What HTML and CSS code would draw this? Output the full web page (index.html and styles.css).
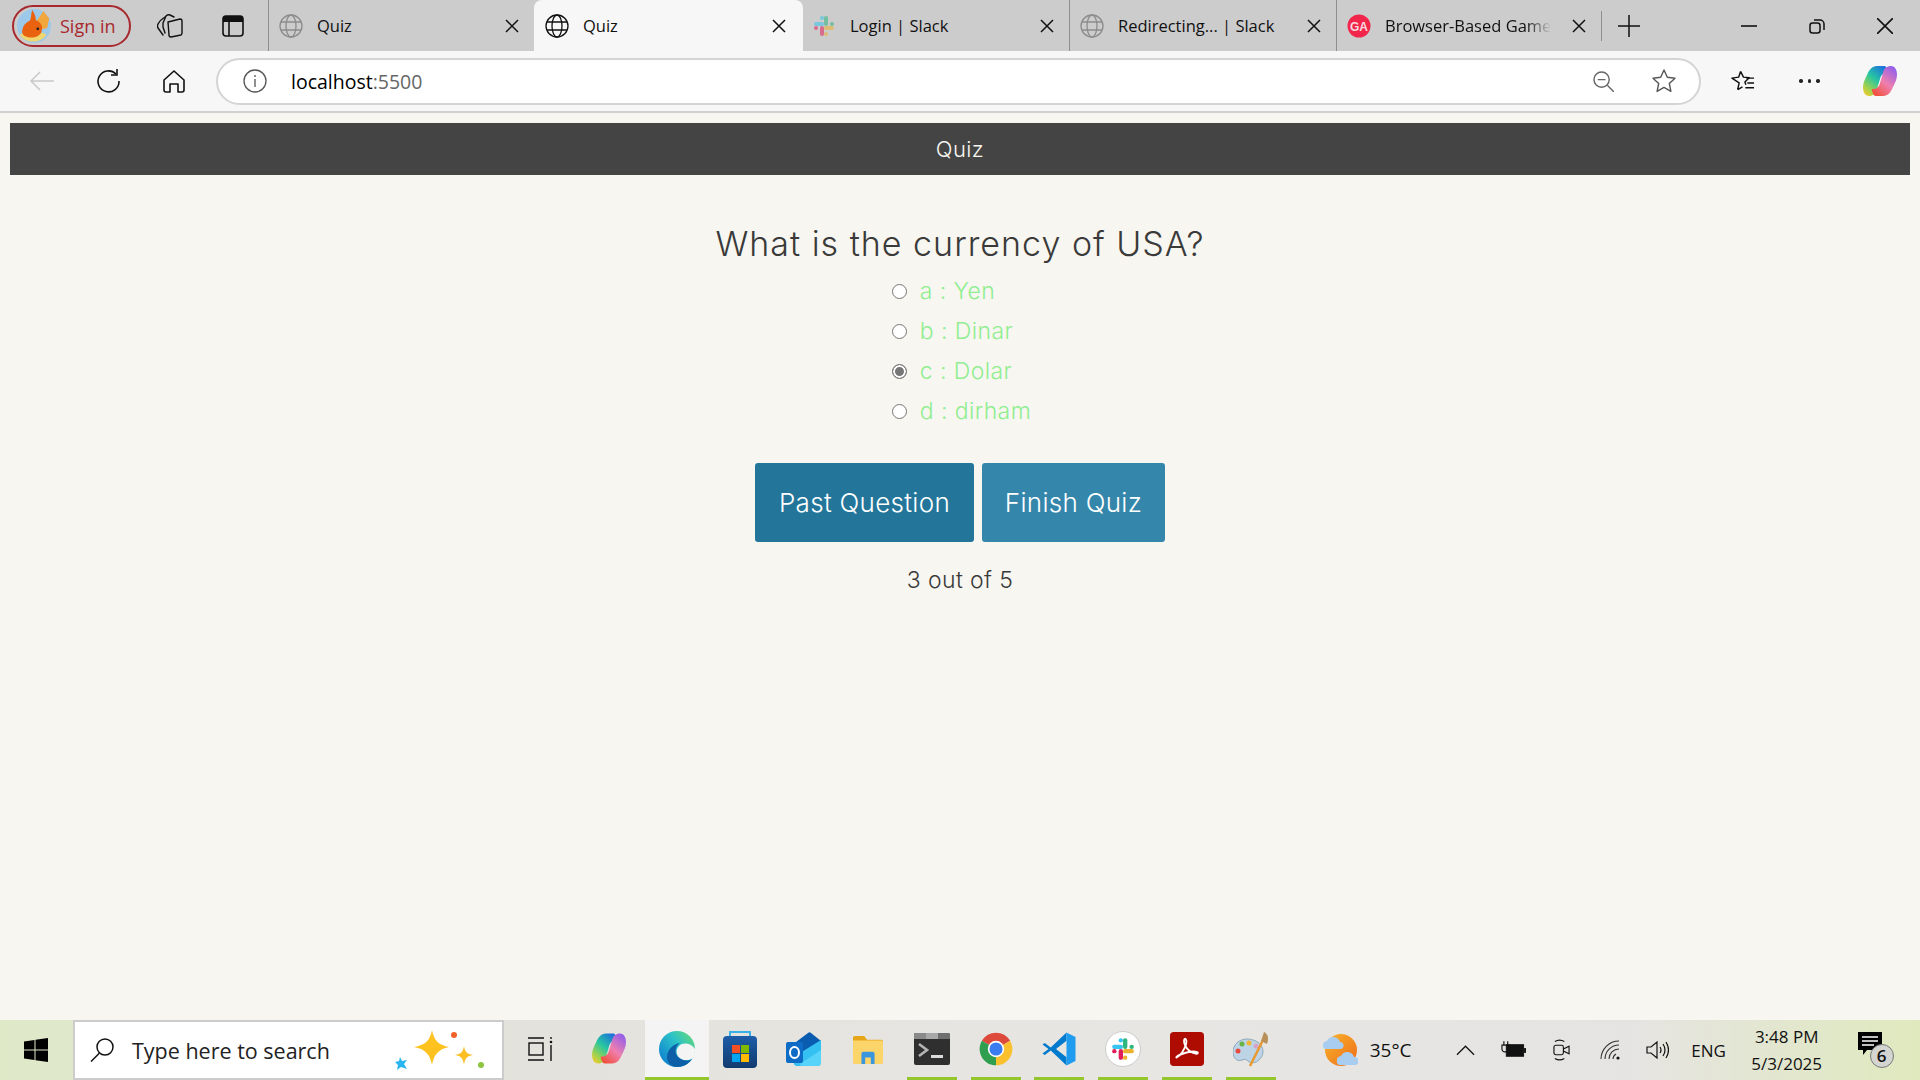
FILE: index.html
```html
<!DOCTYPE html>
<html lang="en">
<head>
  <meta charset="UTF-8">
  <title>Quiz</title>
  <link rel="stylesheet" href="styles.css">
</head>
<body>

<!-- shared icons -->
<svg class="defs" width="0" height="0">
  <defs>
    <symbol id="globe" viewBox="0 0 24 24">
      <g fill="none" stroke="currentColor" stroke-width="1.3">
        <circle cx="12" cy="12" r="11"/>
        <ellipse cx="12" cy="12" rx="5" ry="11"/>
        <path d="M2 8h20M2 16h20"/>
      </g>
    </symbol>
    <symbol id="close" viewBox="0 0 14 14">
      <path d="M1 1l12 12M13 1L1 13" fill="none" stroke="currentColor" stroke-width="1.5"/>
    </symbol>
    <symbol id="slack" viewBox="0 0 24 24">
      <g fill="none" stroke-width="4" stroke-linecap="round">
        <path d="M4 10h6" stroke="#36c5f0"/>
        <path d="M14 4v6" stroke="#2eb67d"/>
        <path d="M14 14h6" stroke="#ecb22e"/>
        <path d="M10 14v6" stroke="#e01e5a"/>
      </g>
      <circle cx="10" cy="4" r="2" fill="#36c5f0"/>
      <circle cx="20" cy="10" r="2" fill="#2eb67d"/>
      <circle cx="14" cy="20" r="2" fill="#ecb22e"/>
      <circle cx="4" cy="14" r="2" fill="#e01e5a"/>
    </symbol>
    <linearGradient id="copA" x1="0.8" y1="0" x2="0.1" y2="1">
      <stop offset="0" stop-color="#1b6fe0"/>
      <stop offset="0.45" stop-color="#28c7a0"/>
      <stop offset="0.8" stop-color="#a8d24a"/>
      <stop offset="1" stop-color="#f6c92c"/>
    </linearGradient>
    <linearGradient id="copB" x1="0.8" y1="0" x2="0.1" y2="1">
      <stop offset="0" stop-color="#f0503c"/>
      <stop offset="0.45" stop-color="#ef7fae"/>
      <stop offset="1" stop-color="#8a5cf0"/>
    </linearGradient>
    <symbol id="copilot" viewBox="0 0 34 32">
      <path d="M14 1h7c2 0 3 2 4 5v2c-5 0-7 2-8 6l-3 10c-1 5-4 7-8 7-4 0-6-4-6-9 0-4 2-8 4-12 2-5 5-9 10-9z" fill="url(#copA)"/>
      <path d="M14 1h7c2 0 3 2 4 5v2c-5 0-7 2-8 6l-3 10c-1 5-4 7-8 7-4 0-6-4-6-9 0-4 2-8 4-12 2-5 5-9 10-9z" fill="url(#copB)" transform="rotate(180 17 16)"/>
    </symbol>
    <linearGradient id="edgeGrad" x1="1" y1="0" x2="0" y2="0.8">
      <stop offset="0" stop-color="#6fdc6a"/>
      <stop offset="0.45" stop-color="#2cc3c8"/>
      <stop offset="1" stop-color="#0f7fd0"/>
    </linearGradient>
    <linearGradient id="bagGrad" x1="0" y1="0" x2="0" y2="1">
      <stop offset="0" stop-color="#1d5ea8"/>
      <stop offset="1" stop-color="#123a6e"/>
    </linearGradient>
    <linearGradient id="sunGrad" x1="0" y1="0" x2="1" y2="1">
      <stop offset="0" stop-color="#f8b62a"/>
      <stop offset="1" stop-color="#ee6a1c"/>
    </linearGradient>
  </defs>
</svg>

<div class="browser">

  <!-- tab strip -->
  <div class="tabstrip">
    <div class="signin">
      <svg class="avatar" viewBox="0 0 36 36">
        <circle cx="18" cy="18" r="18" fill="#9cc9ea"/>
        <path d="M3 27c6-3 22-4 28 0-5 10-23 10-28 0z" fill="#f0d66e"/>
        <path d="M20 14l8-12 6 8-2 10-8 2z" fill="#f3a63c"/>
        <path d="M16 1c3 4 4 8 4 11 5 2 8 6 6 12-2 5-8 7-14 6-5-1-8-4-6-9 1-5 5-7 8-9 1-4 1-7 2-11z" fill="#e8620f"/>
        <circle cx="22" cy="21" r="1.5" fill="#222"/>
      </svg>
      <span>Sign in</span>
    </div>
    <svg class="strip-icon collections" viewBox="0 0 26 24" fill="none" stroke="#111" stroke-width="1.4" stroke-linejoin="round" stroke-linecap="round">
      <path d="M8 3Q3 6 1 10q-1 2 0 4l5 7"/>
      <path d="M17 3l-4-2q-2-1-4 1L6 9q0 2 0 4l2 6"/>
      <path d="M11 8l12-3q2 0 2 2v12q0 1-1 2l-10 2q-2 0-2-2z"/>
    </svg>
    <svg class="strip-icon verttabs" viewBox="0 0 22 22">
      <rect x="1" y="1" width="20" height="20" rx="3" fill="none" stroke="#111" stroke-width="1.6"/>
      <path d="M1 4a3 3 0 0 1 3-3h14a3 3 0 0 1 3 3v3H1z" fill="#111"/>
      <path d="M7 7v14" stroke="#111" stroke-width="1.6"/>
    </svg>

    <div class="tab sep tab-first">
      <svg class="tab-icon dim"><use href="#globe"/></svg>
      <span class="tab-title">Quiz</span>
      <svg class="tab-close"><use href="#close"/></svg>
    </div>
    <div class="tab active">
      <svg class="tab-icon"><use href="#globe"/></svg>
      <span class="tab-title">Quiz</span>
      <svg class="tab-close"><use href="#close"/></svg>
    </div>
    <div class="tab tab-slack">
      <svg class="tab-icon pale"><use href="#slack"/></svg>
      <span class="tab-title">Login | Slack</span>
      <svg class="tab-close"><use href="#close"/></svg>
    </div>
    <div class="tab sep">
      <svg class="tab-icon dim"><use href="#globe"/></svg>
      <span class="tab-title">Redirecting... | Slack</span>
      <svg class="tab-close"><use href="#close"/></svg>
    </div>
    <div class="tab sep tab-ga">
      <svg class="tab-icon ga" viewBox="0 0 24 24">
        <circle cx="12" cy="12" r="11.5" fill="#f2264b"/>
        <text x="12" y="16.500" text-anchor="middle" class="ga-text">GA</text>
      </svg>
      <span class="tab-title fade">Browser-Based Game</span>
      <svg class="tab-close"><use href="#close"/></svg>
    </div>
    <div class="sep-line"></div>
    <svg class="plus" viewBox="0 0 22 22"><path d="M11 0v22M0 11h22" stroke="#111" stroke-width="1.5"/></svg>

    <div class="win-controls">
      <svg class="win-btn" viewBox="0 0 16 16"><path d="M0 8h16" stroke="#111" stroke-width="1.6"/></svg>
      <svg class="win-btn" viewBox="0 0 16 16" fill="none" stroke="#111" stroke-width="1.5">
        <rect x="1" y="5" width="10" height="10" rx="2.5"/>
        <path d="M5 2h6a4 4 0 0 1 4 4v6"/>
      </svg>
      <svg class="win-btn" viewBox="0 0 16 16"><path d="M0 0l16 16M16 0L0 16" stroke="#111" stroke-width="1.6"/></svg>
    </div>
  </div>

  <!-- address bar -->
  <div class="toolbar">
    <svg class="tool back" viewBox="0 0 24 20" fill="none" stroke="#c9c9c9" stroke-width="1.5"><path d="M24 10H1M10 1l-9 9 9 9"/></svg>
    <svg class="tool reload" viewBox="0 0 24 24" fill="none" stroke="#111" stroke-width="1.6"><path d="M20 5a10.5 10.5 0 1 0 3 7"/><path d="M21 0v6h-6"/></svg>
    <svg class="tool home" viewBox="0 0 22 23" fill="none" stroke="#111" stroke-width="1.6" stroke-linejoin="round"><path d="M1 10L11 1l10 9v10a2 2 0 0 1-2 2h-4v-8H7v8H3a2 2 0 0 1-2-2z"/></svg>
    <div class="omnibox">
      <svg class="info" viewBox="0 0 24 24" fill="none" stroke="#555" stroke-width="1.3"><circle cx="12" cy="12" r="11"/><path d="M12 10v8M12 6v2"/></svg>
      <span class="url">localhost<span class="port">:5500</span></span>
      <svg class="zoomout" viewBox="0 0 22 22" fill="none" stroke="#666" stroke-width="1.5"><circle cx="9" cy="9" r="8"/><path d="M5 9h8M15 15l7 7"/></svg>
      <svg class="star" viewBox="0 0 24 24" fill="none" stroke="#555" stroke-width="1.4" stroke-linejoin="round"><path d="M12 1l3.300 7.300 7.700.9-5.700 5.300 1.600 7.900L12 18.400l-6.900 4 1.600-7.900L1 9.200l7.700-.9z"/></svg>
    </div>
    <svg class="tool favs" viewBox="0 0 26 24" fill="none" stroke="#111" stroke-width="1.5" stroke-linejoin="round"><path d="M11 2l3 6 6 .7-4.500 4.300 1 3M8 21l1.500-7L2 9l7-1 2-6M8 21l5-3"/><path d="M17 9h8M18 14h7M16 19h9"/></svg>
    <div class="dots"><i></i><i></i><i></i></div>
    <svg class="tool copilot-top"><use href="#copilot"/></svg>
  </div>

  <!-- the quiz page -->
  <div class="page">
    <div class="title-bar">Quiz</div>
    <div class="quiz">
      <h2 class="question">What is the currency of USA?</h2>
      <form class="options">
        <label class="option"><input type="radio" name="answer"> a : Yen</label>
        <label class="option"><input type="radio" name="answer"> b : Dinar</label>
        <label class="option"><input type="radio" name="answer" checked> c : Dolar</label>
        <label class="option"><input type="radio" name="answer"> d : dirham</label>
      </form>
      <div class="actions">
        <button class="btn btn-past" type="button">Past Question</button>
        <button class="btn btn-finish" type="button">Finish Quiz</button>
      </div>
      <p class="progress">3 out of 5</p>
    </div>
  </div>

  <!-- windows taskbar -->
  <div class="taskbar">
    <div class="start">
      <svg viewBox="0 0 24 24" width="24" height="24"><path d="M0 3.500l10.500-1.500v9.500H0zM11.500 1.800L24 0v11.500H11.500zM0 12.500h10.500V22L0 20.500zM11.500 12.500H24V24l-12.500-1.800z" fill="#000"/></svg>
    </div>
    <div class="search">
      <svg class="search-icon" viewBox="0 0 24 24" fill="none" stroke="#111" stroke-width="1.5"><circle cx="15" cy="9" r="8"/><path d="M9.500 15L1 23.500"/></svg>
      <span class="search-text">Type here to search</span>
      <svg class="sparkles" viewBox="0 0 94 40">
        <path d="M37 0c2 11 7 15 17 17-10 2-15 7-17 18-2-11-7-16-18-18 11-2 16-6 18-17z" fill="#fdc21e"/>
        <path d="M69 16c1 6 3 8 9 9-6 1-8 3-9 10-1-7-3-9-9-10 6-1 8-3 9-9z" fill="#fbbf24"/>
        <path d="M5 27l2 4 5-1-3 4 3 5-6-2-4 3 1-5-3-3 4-1z" fill="#29b6f0"/>
        <circle cx="59" cy="5" r="3" fill="#f2612a"/>
        <circle cx="86" cy="35" r="3" fill="#8cc63f"/>
      </svg>
    </div>
    <div class="slot taskview">
      <svg viewBox="0 0 28 24" width="28" height="24" fill="none" stroke="#111" stroke-width="1.4"><path d="M1 1h16M1 23h16"/><rect x="2" y="6" width="14" height="12"/><path d="M24 0v2M24 8v16"/><circle cx="24" cy="5" r="1.300" fill="#111" stroke="none"/></svg>
    </div>
    <div class="slot slot-copilot">
      <svg width="34" height="33"><use href="#copilot"/></svg>
    </div>
    <div class="slot slot-edge">
      <svg viewBox="0 0 36 36" width="36" height="36">
        <circle cx="18" cy="18" r="18" fill="url(#edgeGrad)"/>
        <path d="M36 18c-4-6-12-7-16-3-4 4-3 10 2 13 4 2 9 2 13-2 1-2 1-5 1-8z" fill="#f4f4f4"/>
        <path d="M33 28c-3 5-9 8-15 8-6 0-10-4-10-10 0-7 6-13 13-14-5 3-6 10-2 14 3 3 9 5 14 2z" fill="#0d5fa8"/>
      </svg>
    </div>
    <div class="slot">
      <svg viewBox="0 0 36 38" width="36" height="38">
        <path d="M8 8V2h20v6" fill="none" stroke="#39b0e8" stroke-width="2"/>
        <rect x="1" y="6" width="34" height="32" rx="4" fill="url(#bagGrad)"/>
        <rect x="10" y="15" width="8" height="8" fill="#f25022"/>
        <rect x="19" y="15" width="8" height="8" fill="#7fba00"/>
        <rect x="10" y="24" width="8" height="8" fill="#00a4ef"/>
        <rect x="19" y="24" width="8" height="8" fill="#ffb900"/>
      </svg>
    </div>
    <div class="slot">
      <svg viewBox="0 0 36 36" width="36" height="36">
        <path d="M6 14L22 2c1-1 2-1 3 0l10 8v10H6z" fill="#0a5cb0"/>
        <path d="M14 22L35 9v22c0 2-1 4-3 4H11c-2 0-4-2-3-4z" fill="#35c0f2"/>
        <path d="M14 33l21-14v12c0 2-1 4-3 4H17c-2 0-3-1-3-2z" fill="#58d3fa"/>
        <rect x="0" y="11" width="17" height="21" rx="2" fill="#0f6cc6"/>
        <ellipse cx="8.500" cy="21.500" rx="4.500" ry="5.500" fill="none" stroke="#fff" stroke-width="2"/>
      </svg>
    </div>
    <div class="slot">
      <svg viewBox="0 0 32 32" width="32" height="30">
        <path d="M0 4a2 2 0 0 1 2-2h10l3 4h15a2 2 0 0 1 2 2v22H0z" fill="#e6a618"/>
        <path d="M0 7h30a2 2 0 0 1 2 2v21a2 2 0 0 1-2 2H2a2 2 0 0 1-2-2z" fill="#fcd56a"/>
        <path d="M9 32V21a2 2 0 0 1 2-2h10a2 2 0 0 1 2 2v11h-4v-7h-6v7z" fill="#3a96dd"/>
      </svg>
    </div>
    <div class="slot running">
      <svg viewBox="0 0 36 32" width="36" height="32">
        <rect width="36" height="32" rx="2" fill="#2f2f2f"/>
        <path d="M0 2a2 2 0 0 1 2-2h10v6H0z" fill="#8a8a8a"/>
        <rect x="12" y="0" width="12" height="6" fill="#a8a8a8"/>
        <path d="M24 0h10a2 2 0 0 1 2 2v4H24z" fill="#6f6f6f"/>
        <path d="M5 11l8 6-8 6" fill="none" stroke="#b5b5b5" stroke-width="2.600"/>
        <rect x="17" y="22" width="12" height="3" fill="#dcdcdc"/>
      </svg>
    </div>
    <div class="slot running">
      <svg viewBox="2 2 44 44" width="36" height="36">
        <path d="M24 24L6.700 14A20 20 0 0 1 41.300 14z" fill="#dd4a3c"/>
        <path d="M24 24L41.300 14A20 20 0 0 1 24 44z" fill="#fbc02d"/>
        <path d="M24 24V44A20 20 0 0 1 6.700 14z" fill="#2f9e4f"/>
        <circle cx="24" cy="24" r="10" fill="#fff"/>
        <circle cx="24" cy="24" r="8" fill="#3b7df0"/>
      </svg>
    </div>
    <div class="slot running">
      <svg viewBox="0 0 24 24" width="36" height="36">
        <path d="M17 1L6.500 11 2.500 8 1 9l4 3-4 3 1.500 1 4-3L17 23v-5.500L10 12l7-5.500z" fill="#007acc"/>
        <path d="M17 1l6 3v16l-6 3z" fill="#1f9cf0"/>
      </svg>
    </div>
    <div class="slot running">
      <div class="slack-badge"><svg width="26" height="26"><use href="#slack"/></svg></div>
    </div>
    <div class="slot running">
      <svg viewBox="0 0 36 36" width="34" height="36">
        <rect width="36" height="36" rx="4" fill="#ae0c00"/>
        <path d="M7 27c4-2 8-8 10-14 1-3 0-6-1-6s-2 3 0 7c2 5 6 8 12 9 2 0 2-2 0-2-5-1-12 1-17 3-3 1-5 3-4 3z" fill="none" stroke="#fff" stroke-width="2"/>
      </svg>
    </div>
    <div class="slot running">
      <svg viewBox="0 0 36 36" width="36" height="36">
        <path d="M14 8C6 8 0 14 0 21c0 6 4 10 9 8 3-1 4-1 6 1 3 3 8 2 11-1 4-4 5-8 3-13-2-5-9-8-15-8z" fill="#bcd4e6" stroke="#8fa9bd"/>
        <circle cx="5" cy="20" r="2.500" fill="#e64a3c"/>
        <circle cx="9" cy="13" r="2.500" fill="#68b345"/>
        <circle cx="16" cy="12" r="2.500" fill="#f2b632"/>
        <circle cx="23" cy="15" r="2.500" fill="#d9a2c8"/>
        <path d="M17 35L30 9" stroke="#e89a30" stroke-width="2.500"/>
        <path d="M28 10l3-9c4 2 5 6 3 12z" fill="#b8905a"/>
      </svg>
    </div>

    <div class="tray">
      <svg class="weather" viewBox="0 0 37 34">
        <circle cx="20" cy="17" r="16" fill="url(#sunGrad)"/>
        <path d="M2 13a4 4 0 0 1 4-5 7 7 0 0 1 13 1 3.500 3.500 0 0 1 0 7H4a3 3 0 0 1-2-3z" fill="#a9cdf0"/>
        <path d="M16 28a4 4 0 0 1 4-5 7 7 0 0 1 13 1 3.500 3.500 0 0 1 1 8H19a3 3 0 0 1-3-4z" fill="#a9cdf0"/>
      </svg>
      <span class="temp">35°C</span>
      <div class="tray-icons">
        <span class="tray-icon"><svg viewBox="0 0 20 12" width="19" height="12" fill="none" stroke="#111" stroke-width="1.300"><path d="M1 11l9-9 9 9"/></svg></span>
        <span class="tray-icon"><svg viewBox="0 0 26 18" width="25" height="18"><path d="M3 0v4M7 0v4M1 4h8v4a3 3 0 0 1-3 3H4a3 3 0 0 1-3-3z" fill="none" stroke="#111" stroke-width="1.200"/><rect x="5.500" y="3.500" width="18" height="12" fill="#111" stroke="#111"/><rect x="24" y="7" width="2" height="5" fill="#111"/></svg></span>
        <span class="tray-icon"><svg viewBox="0 0 18 24" width="17" height="24" fill="none" stroke="#111" stroke-width="1.200"><rect x="1" y="7" width="10" height="10" rx="2"/><path d="M11 11l6-3v8l-6-3M2 3q5-3 10 0M2 21q5 3 10 0"/></svg></span>
        <span class="tray-icon"><svg viewBox="0 0 20 20" width="20" height="20" fill="none" stroke="#333" stroke-width="1.100"><path d="M1 19A18 18 0 0 1 19 1M5 19A14 14 0 0 1 19 5M9 19A10 10 0 0 1 19 9M13 19a6 6 0 0 1 3-5"/><circle cx="18" cy="18" r="1.600" fill="#111" stroke="none"/></svg></span>
        <span class="tray-icon"><svg viewBox="0 0 23 20" width="23" height="20" fill="none" stroke="#111" stroke-width="1.200"><path d="M1 7h4l6-5v16l-6-5H1zM14 7q2 3 0 6M17 4q4 6 0 12M20 2q5 8 0 16"/></svg></span>
      </div>
      <span class="lang">ENG</span>
      <div class="clock"><span>3:48 PM</span><span>5/3/2025</span></div>
      <div class="notify">
        <svg viewBox="0 0 24 24" width="24" height="24"><path d="M0 0h24v18H9l-4 5v-5H0z" fill="#000"/><path d="M4 5h16M4 9h16M4 13h12" stroke="#fff" stroke-width="1.300"/></svg>
        <span class="notify-badge">6</span>
      </div>
    </div>
  </div>

</div>

</body>
</html>
```

FILE: styles.css
```css
* {
  box-sizing: border-box;
}
body {
  margin: 0;
  font-family: 'Open Sans', sans-serif;
  color: #111;
}
.defs {
  position: absolute;
}
.browser {
  display: flex;
  flex-direction: column;
  height: 100vh;
  overflow: hidden;
}

/* tab strip */
.tabstrip {
  display: flex;
  align-items: center;
  flex: 0 0 51px;
  padding-left: 12px;
  background: #cccccc;
  font-size: 16.500px;
}
.signin {
  display: flex;
  align-items: center;
  gap: 9px;
  width: 119px;
  height: 42px;
  padding-left: 3px;
  border: 2px solid #a8282d;
  border-radius: 21px;
  color: #a8282d;
  font-size: 18px;
}
.avatar {
  width: 34px;
  height: 34px;
  flex: none;
}
.strip-icon {
  flex: none;
}
.collections {
  width: 26px;
  height: 24px;
  margin-left: 26px;
}
.verttabs {
  width: 22px;
  height: 22px;
  margin-left: 39px;
  margin-right: 24px;
}
.tab {
  display: flex;
  align-items: center;
  width: 267px;
  height: 51px;
  padding: 0 15px 0 10px;
  flex: none;
}
.tab-first {
  width: 266px;
}
.tab-slack {
  width: 266px;
  padding-left: 9px;
}
.tab.sep {
  border-left: 1px solid #8e8e8e;
  background-clip: padding-box;
}
.tab-ga {
  width: 265px;
}
.tab.active {
  width: 269px;
  padding: 0 17px 0 11px;
  background: #f7f7f7;
  border-radius: 8px 8px 0 0;
}
.tab-icon {
  width: 24px;
  height: 24px;
  margin-right: 14px;
  flex: none;
  color: #111;
}
.tab-icon.dim {
  color: #8c8c8c;
}
.tab-icon.pale {
  opacity: 0.55;
}
.ga-text {
  font-family: 'Liberation Sans', sans-serif;
  font-size: 12px;
  font-weight: bold;
  fill: #f8d8de;
}
.tab-title {
  white-space: nowrap;
}
.fade {
  -webkit-mask-image: linear-gradient(to right, #000 85%, transparent);
  mask-image: linear-gradient(to right, #000 85%, transparent);
}
.tab-close {
  width: 14px;
  height: 14px;
  margin-left: auto;
  flex: none;
  color: #111;
}
.sep-line {
  width: 1px;
  height: 30px;
  background: #8e8e8e;
  flex: none;
}
.plus {
  width: 22px;
  height: 22px;
  margin-left: 16px;
  flex: none;
}
.win-controls {
  display: flex;
  align-items: center;
  gap: 52px;
  margin-left: auto;
  padding-right: 27px;
}
.win-btn {
  width: 16px;
  height: 16px;
}

/* toolbar */
.toolbar {
  display: flex;
  align-items: center;
  flex: 0 0 62px;
  background: #f7f7f7;
  border-bottom: 2px solid #d0d0d0;
}
.back {
  width: 24px;
  height: 20px;
  margin-left: 30px;
}
.reload {
  width: 24px;
  height: 24px;
  margin-left: 42px;
}
.home {
  width: 22px;
  height: 23px;
  margin-left: 43px;
}
.omnibox {
  display: flex;
  align-items: center;
  width: 1485px;
  height: 47px;
  margin-left: 31px;
  padding-left: 25px;
  border: 2px solid #d4d4d4;
  border-radius: 24px;
  background: #fff;
}
.info {
  width: 24px;
  height: 24px;
}
.url {
  margin-left: 24px;
  font-size: 19.500px;
  color: #000;
}
.port {
  color: #666;
}
.zoomout {
  width: 21px;
  height: 21px;
  margin-left: auto;
}
.star {
  width: 24px;
  height: 24px;
  margin-left: 38px;
  margin-right: 23px;
}
.favs {
  width: 25px;
  height: 24px;
  margin-left: 29px;
}
.dots {
  display: flex;
  gap: 5px;
  margin-left: 44px;
}
.dots i {
  width: 3.500px;
  height: 3.500px;
  border-radius: 50%;
  background: #222;
}
.copilot-top {
  width: 34px;
  height: 32px;
  margin-left: 43px;
}

/* page */
.page {
  flex: 1;
  padding: 10px 10px 0;
  background: #f8f6f1;
  font-family: 'Inter', sans-serif;
  font-weight: 300;
  color: #3a3a3a;
}
.title-bar {
  height: 52px;
  line-height: 52px;
  text-align: center;
  background: #444444;
  color: #f8f6f1;
  font-size: 22px;
  letter-spacing: 0.4px;
}
.quiz {
  display: flex;
  flex-direction: column;
  align-items: center;
}
.question {
  margin: 47px 0 0;
  font-size: 34px;
  line-height: 44px;
  font-weight: 300;
  letter-spacing: 1px;
}
.options {
  display: flex;
  flex-direction: column;
  width: 136px;
  margin-top: 5px;
}
.option {
  display: flex;
  align-items: center;
  gap: 6px;
  height: 40px;
  white-space: pre;
  color: lightgreen;
  font-size: 23px;
  letter-spacing: 0.4px;
}
.option input {
  appearance: none;
  width: 15px;
  height: 15px;
  margin: 0;
  flex: none;
  border: 1.500px solid #767676;
  border-radius: 50%;
  background: #fff;
}
.option input:checked {
  background: #767676;
  box-shadow: inset 0 0 0 2px #fff;
}
.actions {
  display: flex;
  gap: 8px;
  margin-top: 32px;
}
.btn {
  height: 79px;
  padding: 0;
  border: none;
  border-radius: 3px;
  color: #fff;
  font-family: inherit;
  font-size: 26px;
  font-weight: 300;
  letter-spacing: 0.3px;
  white-space: nowrap;
}
.btn-past {
  width: 219px;
  background: #23769a;
}
.btn-finish {
  width: 183px;
  background: #3487ab;
}
.progress {
  margin: 23px 0 0;
  font-size: 23px;
  line-height: 30px;
  letter-spacing: 0.4px;
}

/* taskbar */
.taskbar {
  display: flex;
  align-items: stretch;
  flex: 0 0 60px;
  background: linear-gradient(to right, #dfe9c8 0, #e3e2dc 27%, #e8e6e3 60%, #e6e4e2 85%, #dfe9bd 100%);
  font-size: 19px;
}
.start {
  display: flex;
  align-items: center;
  width: 73px;
  padding-left: 24px;
  flex: none;
}
.search {
  display: flex;
  align-items: center;
  width: 431px;
  padding: 0 13px 0 15px;
  border: 2px solid #cccccc;
  background: #fff;
  flex: none;
}
.search-icon {
  width: 24px;
  height: 24px;
  flex: none;
}
.search-text {
  margin-left: 18px;
  font-size: 21.500px;
  color: #222;
}
.sparkles {
  width: 94px;
  height: 40px;
  margin-left: auto;
}
.slot {
  display: flex;
  align-items: center;
  justify-content: center;
  width: 63.800px;
  padding-bottom: 3px;
  flex: none;
}
.taskview {
  margin-left: 5px;
}
.slot-copilot {
  width: 72px;
}
.slot-edge {
  background: #f4f4f4;
  border-bottom: 3px solid #94c62e;
  padding-bottom: 0;
}
.running {
  width: 50px;
  margin: 0 6.900px;
  padding-bottom: 0;
  border-bottom: 3px solid #94c62e;
}
.slack-badge {
  display: flex;
  align-items: center;
  justify-content: center;
  width: 36px;
  height: 36px;
  border-radius: 50%;
  border: 1px solid #ccc;
  background: #fff;
}
.tray {
  display: flex;
  align-items: center;
  margin-left: 38px;
}
.weather {
  width: 37px;
  height: 34px;
  flex: none;
}
.temp {
  margin-left: 12px;
  width: 43px;
  white-space: nowrap;
}
.tray-icons {
  display: flex;
  margin-left: 29px;
}
.tray-icon {
  display: flex;
  align-items: center;
  justify-content: center;
  width: 48px;
  height: 30px;
}
.lang {
  margin-left: 5px;
  width: 44px;
  text-align: center;
  font-size: 17px;
}
.clock {
  display: flex;
  flex-direction: column;
  align-items: center;
  gap: 4px;
  width: 100px;
  margin-left: 6px;
  font-size: 17px;
  line-height: 23px;
}
.notify {
  position: relative;
  width: 35px;
  height: 36px;
  margin-left: 21px;
}
.notify-badge {
  position: absolute;
  left: 12px;
  top: 12px;
  width: 24px;
  height: 24px;
  line-height: 22px;
  text-align: center;
  border: 1px solid #777;
  border-radius: 50%;
  background: #d4d4d0;
  font-size: 17px;
  font-weight: 600;
}
```
